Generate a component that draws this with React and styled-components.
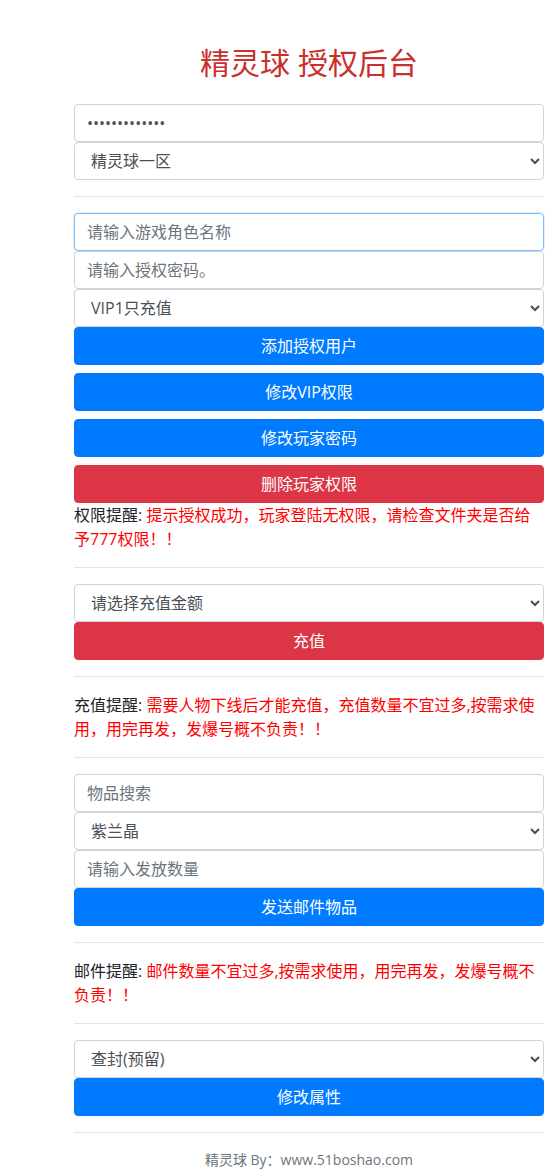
import React from 'react';
import styled, { createGlobalStyle } from 'styled-components';

const GlobalStyle = createGlobalStyle`
  body {
    margin: 0;
    background: #fff;
    color: #212529;
    font-family: "Open Sans", "Noto Sans CJK SC", sans-serif;
    font-size: 16px;
    line-height: 1.5;
  }
  * {
    box-sizing: border-box;
  }
`;

const sections = {
  account: [
    { kind: 'input', placeholder: '请输入游戏角色名称', focused: true },
    { kind: 'input', placeholder: '请输入授权密码。' },
    { kind: 'select', options: ['VIP1只充值', 'VIP2', 'VIP3'] },
    { kind: 'button', label: '添加授权用户' },
    { kind: 'button', label: '修改VIP权限', gap: true },
    { kind: 'button', label: '修改玩家密码', gap: true },
    { kind: 'button', label: '删除玩家权限', gap: true, danger: true },
  ],
  recharge: [
    { kind: 'select', options: ['请选择充值金额', '100', '500', '1000'] },
    { kind: 'button', label: '充值', danger: true },
  ],
  mail: [
    { kind: 'input', placeholder: '物品搜索' },
    { kind: 'select', options: ['紫兰晶'] },
    { kind: 'input', placeholder: '请输入发放数量' },
    { kind: 'button', label: '发送邮件物品' },
  ],
  misc: [
    { kind: 'select', options: ['查封(预留)'] },
    { kind: 'button', label: '修改属性' },
  ],
};

const Field = ({ item }) => {
  if (item.kind === 'input') {
    return <Input type="text" placeholder={item.placeholder} $focused={item.focused} />;
  }
  if (item.kind === 'select') {
    return (
      <Select defaultValue={item.options[0]}>
        {item.options.map(o => (
          <option key={o}>{o}</option>
        ))}
      </Select>
    );
  }
  return (
    <Button type="button" $gap={item.gap} $danger={item.danger}>
      {item.label}
    </Button>
  );
};

const Group = ({ items }) => (
  <Form>
    {items.map(item => (
      <Field key={item.label || item.placeholder || item.options[0]} item={item} />
    ))}
  </Form>
);

export default function App() {
  return (
    <>
      <GlobalStyle />
      <Page>
        <Title>精灵球 授权后台</Title>
        <Form>
          <Input type="password" defaultValue="1234567890123" />
          <Select defaultValue="精灵球一区">
            <option>精灵球一区</option>
            <option>精灵球二区</option>
          </Select>
        </Form>
        <Rule />
        <Group items={sections.account} />
        <Note>
          权限提醒: <Warn>提示授权成功，玩家登陆无权限，请检查文件夹是否给予777权限！！</Warn>
        </Note>
        <Rule />
        <Group items={sections.recharge} />
        <Rule />
        <Note>
          充值提醒: <Warn>需要人物下线后才能充值，充值数量不宜过多,按需求使用，用完再发，发爆号概不负责！！</Warn>
        </Note>
        <Rule />
        <Group items={sections.mail} />
        <Rule />
        <Note>
          邮件提醒: <Warn>邮件数量不宜过多,按需求使用，用完再发，发爆号概不负责！！</Warn>
        </Note>
        <Rule />
        <Group items={sections.misc} />
        <Rule />
        <Footer>精灵球 By：www.51boshao.com</Footer>
      </Page>
    </>
  );
}

const Page = styled.div`
  width: 470px;
  margin-left: 74px;
  padding-bottom: 20px;
`;

const Title = styled.h1`
  margin: 45px 0 23px;
  font-size: 30px;
  line-height: 36px;
  font-weight: 400;
  text-align: center;
  color: #c9302c;
`;

const Form = styled.div`
  display: flex;
  flex-direction: column;
`;

const control = `
  display: block;
  width: 100%;
  height: 38px;
  padding: 6px 12px;
  font-family: "Open Sans", "Noto Sans CJK SC", sans-serif;
  font-size: 16px;
  line-height: 1.5;
  color: #495057;
  background: #fff;
  border: 1px solid #ced4da;
  border-radius: 4px;
  outline: none;
`;

const Input = styled.input`
  ${control}
  border-color: ${p => (p.$focused ? '#80bdff' : '#ced4da')};
  box-shadow: ${p => (p.$focused ? '0 0 0 1px rgba(0, 123, 255, 0.12)' : 'none')};
  &::placeholder {
    color: #6c757d;
  }
`;

const Select = styled.select`
  ${control}
`;

const Button = styled.button`
  display: block;
  width: 100%;
  height: 38px;
  margin-top: ${p => (p.$gap ? '8px' : '0')};
  padding: 6px 12px;
  font-family: "Open Sans", "Noto Sans CJK SC", sans-serif;
  font-size: 16px;
  line-height: 1.5;
  color: #fff;
  background: ${p => (p.$danger ? '#dc3545' : '#007bff')};
  border: 1px solid ${p => (p.$danger ? '#dc3545' : '#007bff')};
  border-radius: 4px;
  cursor: pointer;
`;

const Rule = styled.hr`
  margin: 16px 0;
  border: 0;
  border-top: 1px solid rgba(0, 0, 0, 0.1);
`;

const Note = styled.div`
  font-size: 16px;
  line-height: 24px;
  color: #212529;
`;

const Warn = styled.span`
  color: #ff0000;
`;

const Footer = styled.div`
  font-size: 14px;
  line-height: 21px;
  color: #6c757d;
  text-align: center;
`;
